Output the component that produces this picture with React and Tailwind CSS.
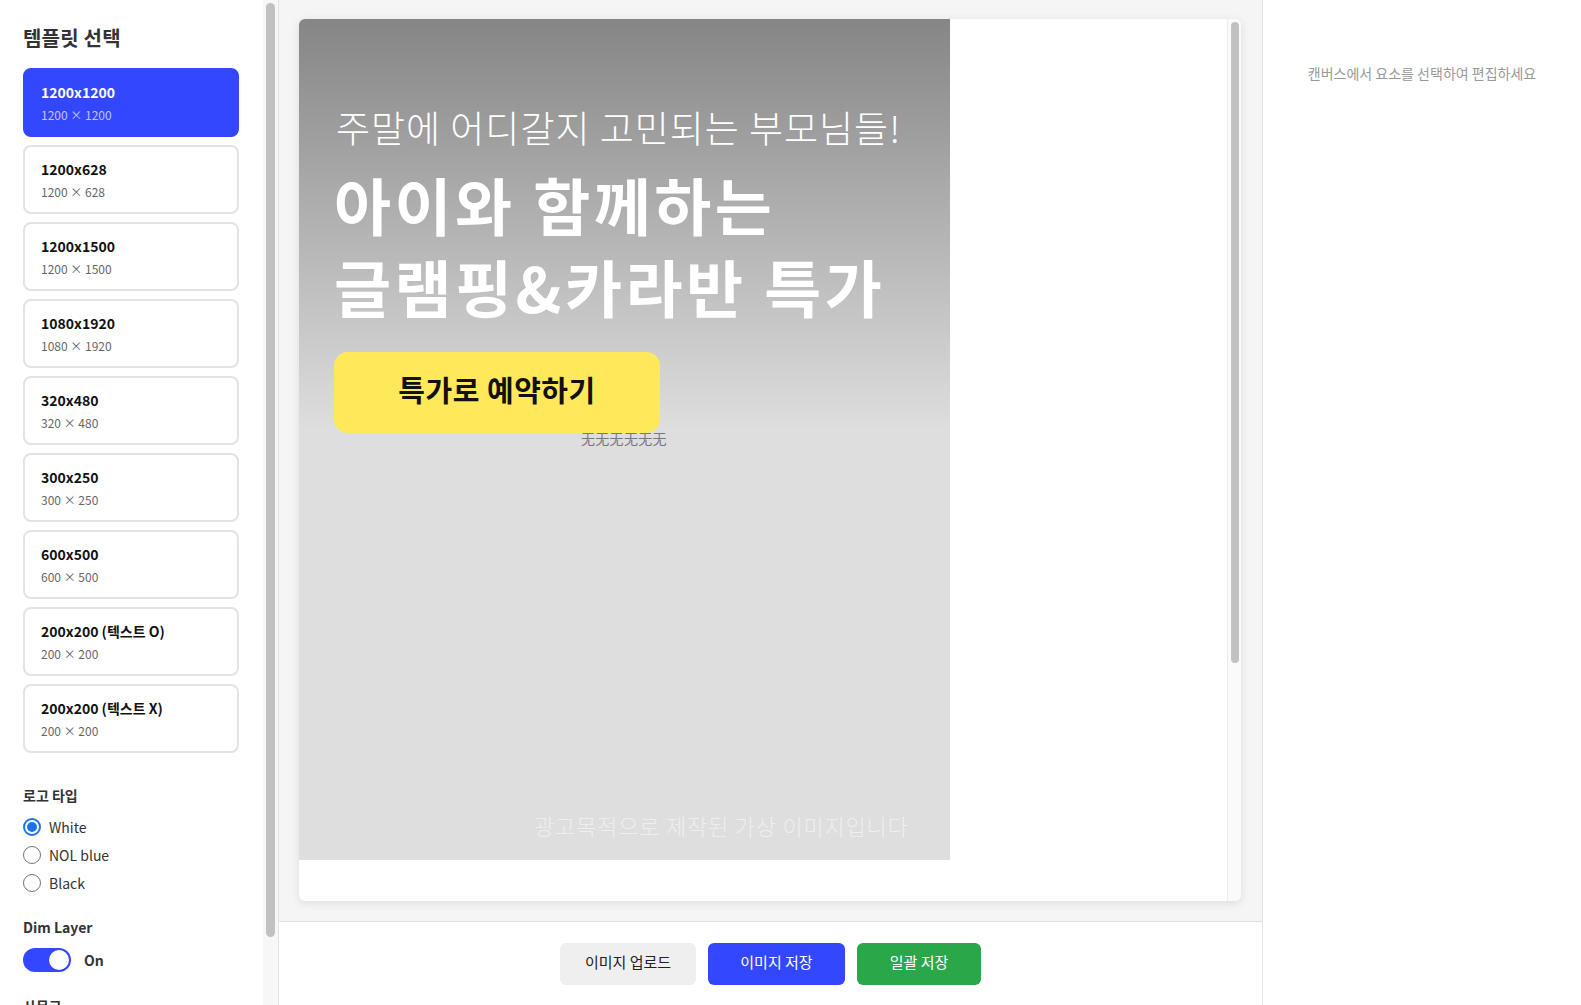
import React from "react";

const templates = [
  { name: "1200x1200", size: "1200 × 1200" },
  { name: "1200x628", size: "1200 × 628" },
  { name: "1200x1500", size: "1200 × 1500" },
  { name: "1080x1920", size: "1080 × 1920" },
  { name: "320x480", size: "320 × 480" },
  { name: "300x250", size: "300 × 250" },
  { name: "600x500", size: "600 × 500" },
  { name: "200x200 (텍스트 O)", size: "200 × 200" },
  { name: "200x200 (텍스트 X)", size: "200 × 200" },
];

function Radio({ checked, label }) {
  return (
    <div className="flex h-[28px] items-center">
      {checked ? (
        <div className="flex h-[18px] w-[18px] items-center justify-center rounded-full border-2 border-[#1a73e8] bg-white">
          <div className="h-[10px] w-[10px] rounded-full bg-[#1a73e8]" />
        </div>
      ) : (
        <div className="h-[18px] w-[18px] rounded-full border border-[#767676] bg-white" />
      )}
      <span className="ml-[8px] text-[14px] leading-[20px] text-[#333]">{label}</span>
    </div>
  );
}

export default function App() {
  return (
    <div className="flex h-[1005px] w-full overflow-hidden bg-white font-['Noto_Sans_CJK_KR',sans-serif]">
      {/* Left sidebar */}
      <aside className="flex h-full w-[279px] shrink-0 border-r border-[#e3e3e3] bg-white">
        <div className="h-full w-[263px] overflow-hidden pl-[23px] pt-[24px]">
          <h2 className="text-[20px] font-bold leading-[28px] tracking-[0.2px] text-[#333]">템플릿 선택</h2>
          <div className="mt-[16px] flex w-[216px] flex-col gap-[8px]">
            {templates.map((t, i) => (
              <div
                key={i}
                className={
                  i === 0
                    ? "h-[69px] rounded-[8px] border-2 border-[#3347ff] bg-[#3347ff] px-[16px] pt-[12px]"
                    : "h-[69px] rounded-[8px] border-2 border-[#e3e3e3] bg-white px-[16px] pt-[12px]"
                }
              >
                <div className={i === 0 ? "text-[14px] font-bold leading-[20px] text-white" : "text-[14px] font-bold leading-[20px] text-[#111]"}>
                  {t.name}
                </div>
                <div className={i === 0 ? "mt-[4px] text-[12px] leading-[17px] text-white/70" : "mt-[4px] text-[12px] leading-[17px] text-[#666]"}>
                  {t.size}
                </div>
              </div>
            ))}
          </div>

          <div className="mt-[32px] text-[14px] font-bold leading-[20px] text-[#333]">로고 타입</div>
          <div className="mt-[8px] flex flex-col">
            <Radio checked label="White" />
            <Radio label="NOL blue" />
            <Radio label="Black" />
          </div>

          <div className="mt-[20px] text-[14px] font-bold leading-[20px] text-[#333]">Dim Layer</div>
          <div className="mt-[11px] flex items-center">
            <div className="flex h-[24px] w-[48px] items-center justify-end rounded-full bg-[#3347ff] px-[2px]">
              <div className="h-[20px] w-[20px] rounded-full bg-white" />
            </div>
            <span className="ml-[13px] text-[14px] font-bold text-[#333]">On</span>
          </div>

          <div className="mt-[24px] text-[14px] font-bold leading-[20px] text-[#333]">사문구</div>
        </div>
        {/* scrollbar */}
        <div className="h-full w-[15px] bg-[#f7f7f7] pl-[3px] pt-[3px]">
          <div className="h-[934px] w-[9px] rounded-full bg-[#c1c1c1]" />
        </div>
      </aside>

      {/* Middle */}
      <main className="flex h-full flex-1 flex-col">
        <div className="flex h-[921px] flex-col bg-[#f5f5f5] pl-[20px] pr-[21px] pt-[19px] pb-[20px]">
          <div className="flex h-[882px] overflow-hidden rounded-[6px] bg-white shadow-[0_2px_10px_rgba(0,0,0,0.1)]">
            <div className="flex-1">
              <div className="relative h-[841px] w-[651px] overflow-hidden bg-[#dedede]">
                <div className="absolute inset-x-0 top-0 h-[411px] bg-gradient-to-b from-black/40 to-black/0" />
                <div className="absolute left-[37px] top-[88px] whitespace-nowrap text-[37px] font-light leading-[40px] tracking-[1px] text-white">
                  주말에 어디갈지 고민되는 부모님들!
                </div>
                <div className="absolute left-[35px] top-[144px] whitespace-nowrap text-[62px] font-bold leading-[82px] tracking-[3.5px] text-white">
                  <div>아이와 함께하는</div>
                  <div>글램핑&amp;카라반 특가</div>
                </div>
                <div className="absolute left-[35px] top-[333px] flex h-[81px] w-[326px] items-center justify-center rounded-[14px] bg-[#ffe95a] pb-[5px]">
                  <span className="text-[29px] font-bold tracking-[0.5px] text-[#111]">특가로 예약하기</span>
                </div>
                <div className="absolute left-[282px] top-[409px] text-[14px] leading-[20px] tracking-[0.3px] text-[#777]">无无无无无无</div>
                <div className="absolute left-[235px] top-[791px] whitespace-nowrap text-[22px] font-light leading-[30px] tracking-[0.8px] text-white/50">
                  광고목적으로 제작된 가상 이미지입니다
                </div>
              </div>
            </div>
            <div className="h-full w-[14px] border-l border-[#ececec] bg-[#fafafa] pl-[3px] pt-[3px]">
              <div className="h-[641px] w-[8px] rounded-full bg-[#c1c1c1]" />
            </div>
          </div>
        </div>
        <div className="flex flex-1 justify-center gap-[12px] border-t border-[#e3e3e3] bg-white pt-[21px]">
          <button className="flex h-[42px] w-[136px] items-center justify-center rounded-[6px] bg-[#efefef] pb-[3px] text-[15px] text-[#222]">
            이미지 업로드
          </button>
          <button className="flex h-[42px] w-[137px] items-center justify-center rounded-[6px] bg-[#3347ff] pb-[3px] text-[15px] text-white">
            이미지 저장
          </button>
          <button className="flex h-[42px] w-[124px] items-center justify-center rounded-[6px] bg-[#2aa748] pb-[3px] text-[15px] text-white">
            일괄 저장
          </button>
        </div>
      </main>

      {/* Right panel */}
      <section className="h-full w-[319px] shrink-0 border-l border-[#e3e3e3] bg-white pt-[63px] text-center">
        <p className="text-[14px] leading-[20px] text-[#999]">캔버스에서 요소를 선택하여 편집하세요</p>
      </section>
    </div>
  );
}
